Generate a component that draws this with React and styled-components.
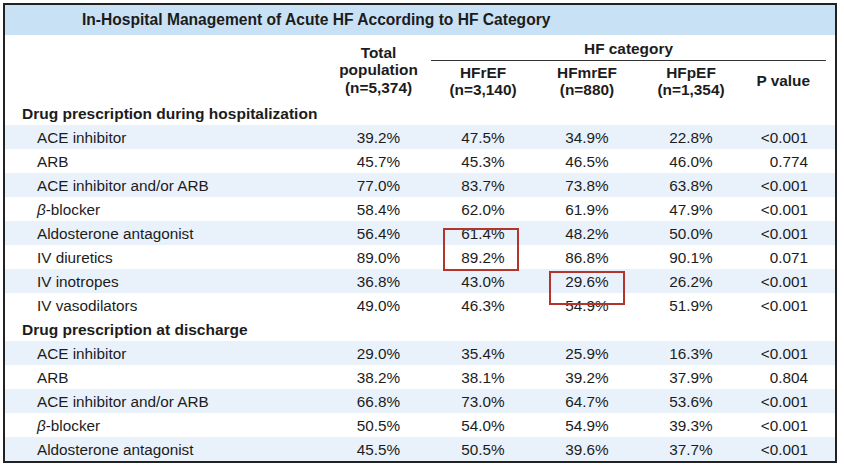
import React from "react";
import styled, { createGlobalStyle } from "styled-components";

const GlobalStyle = createGlobalStyle`
  body {
    margin: 0;
    background: #ffffff;
    font-family: "Liberation Sans", Arial, sans-serif;
    color: #1c1c1c;
  }
`;

const Page = styled.div`
  padding: 3px 0 0 3px;
  width: 844px;
  height: 468px;
  box-sizing: border-box;
`;

const Table = styled.div`
  position: relative;
  width: 834px;
  border: 2px solid #222;
  box-sizing: border-box;
  background: #fff;
`;

const Title = styled.div`
  height: 30px;
  background: #c9e1f5;
  display: flex;
  align-items: center;
  padding-left: 77px;
  font-size: 15.6px;
  font-weight: bold;
`;

const cols = "321px 105px 104px 104px 104px 1fr";

const Header = styled.div`
  display: grid;
  grid-template-columns: ${cols};
  grid-template-rows: 26px 40px;
  font-size: 15.4px;
  font-weight: bold;
  line-height: 17.5px;
`;

const HeadCell = styled.div`
  grid-column: ${({ col }) => col};
  grid-row: ${({ row }) => row};
  display: flex;
  flex-direction: column;
  justify-content: center;
  align-items: ${({ right }) => (right ? "flex-end" : "center")};
  padding-right: ${({ right }) => (right ? "25px" : "0")};
  padding-top: ${({ top }) => top || 0}px;
  text-align: center;
`;

const GroupHead = styled.div`
  grid-column: 3 / 7;
  grid-row: 1;
  margin-right: 9px;
  border-bottom: 1px solid #333;
  display: flex;
  align-items: center;
  justify-content: center;
  padding-top: 2px;
`;

const Section = styled.div`
  height: 24px;
  box-sizing: border-box;
  display: flex;
  align-items: center;
  padding: 2px 0 0 17px;
  font-size: 15.5px;
  font-weight: bold;
`;

const Row = styled.div`
  display: grid;
  grid-template-columns: ${cols};
  height: 24px;
  box-sizing: border-box;
  padding-top: 1px;
  align-items: center;
  font-size: 15.3px;
  background: ${({ shade }) => (shade ? "#e9f2fb" : "#ffffff")};
`;

const Label = styled.div`
  padding-left: 32px;
`;

const Num = styled.div`
  text-align: center;
`;

const PVal = styled.div`
  text-align: right;
  padding-right: 27px;
`;

const Mark = styled.div`
  position: absolute;
  border: 2px solid #b3342a;
  box-sizing: border-box;
  left: ${({ x }) => x}px;
  top: ${({ y }) => y}px;
  width: ${({ w }) => w}px;
  height: ${({ h }) => h}px;
`;

const beta = (
  <>
    <i>β</i>-blocker
  </>
);

const hospital = [
  ["ACE inhibitor", "39.2%", "47.5%", "34.9%", "22.8%", "<0.001"],
  ["ARB", "45.7%", "45.3%", "46.5%", "46.0%", "0.774"],
  ["ACE inhibitor and/or ARB", "77.0%", "83.7%", "73.8%", "63.8%", "<0.001"],
  [beta, "58.4%", "62.0%", "61.9%", "47.9%", "<0.001"],
  ["Aldosterone antagonist", "56.4%", "61.4%", "48.2%", "50.0%", "<0.001"],
  ["IV diuretics", "89.0%", "89.2%", "86.8%", "90.1%", "0.071"],
  ["IV inotropes", "36.8%", "43.0%", "29.6%", "26.2%", "<0.001"],
  ["IV vasodilators", "49.0%", "46.3%", "54.9%", "51.9%", "<0.001"],
];

const discharge = [
  ["ACE inhibitor", "29.0%", "35.4%", "25.9%", "16.3%", "<0.001"],
  ["ARB", "38.2%", "38.1%", "39.2%", "37.9%", "0.804"],
  ["ACE inhibitor and/or ARB", "66.8%", "73.0%", "64.7%", "53.6%", "<0.001"],
  [beta, "50.5%", "54.0%", "54.9%", "39.3%", "<0.001"],
  ["Aldosterone antagonist", "45.5%", "50.5%", "39.6%", "37.7%", "<0.001"],
];

const DataRows = ({ rows }) =>
  rows.map((r, i) => (
    <Row key={i} shade={i % 2 === 0}>
      <Label>{r[0]}</Label>
      <Num>{r[1]}</Num>
      <Num>{r[2]}</Num>
      <Num>{r[3]}</Num>
      <Num>{r[4]}</Num>
      <PVal>{r[5]}</PVal>
    </Row>
  ));

export default function App() {
  return (
    <Page>
      <GlobalStyle />
      <Table>
        <Title>In-Hospital Management of Acute HF According to HF Category</Title>
        <Header>
          <HeadCell col={2} row="1 / 3" top={4}>
            <span>Total</span>
            <span>population</span>
            <span>(n=5,374)</span>
          </HeadCell>
          <GroupHead>HF category</GroupHead>
          <HeadCell col={3} row={2}>
            <span>HFrEF</span>
            <span>(n=3,140)</span>
          </HeadCell>
          <HeadCell col={4} row={2}>
            <span>HFmrEF</span>
            <span>(n=880)</span>
          </HeadCell>
          <HeadCell col={5} row={2}>
            <span>HFpEF</span>
            <span>(n=1,354)</span>
          </HeadCell>
          <HeadCell col={6} row={2} right>
            P value
          </HeadCell>
        </Header>
        <Section>Drug prescription during hospitalization</Section>
        <DataRows rows={hospital} />
        <Section>Drug prescription at discharge</Section>
        <DataRows rows={discharge} />
        <Mark x={438} y={223} w={76} h={43} />
        <Mark x={544} y={266} w={76} h={34} />
      </Table>
    </Page>
  );
}
